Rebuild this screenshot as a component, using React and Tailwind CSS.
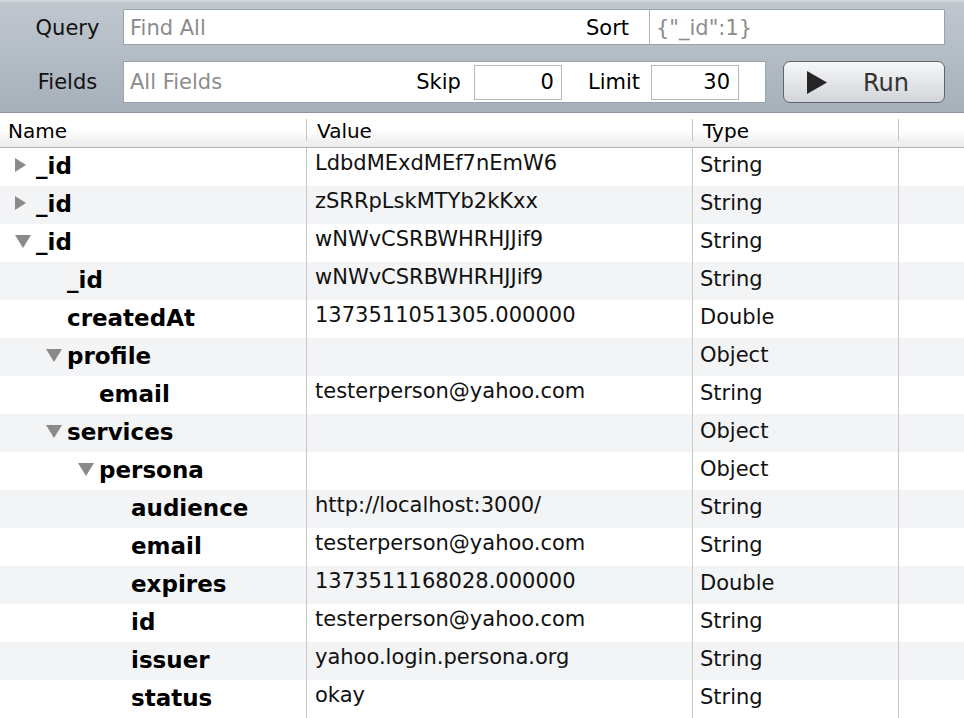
const rows = [
  { name: "_id", level: 0, toggle: "closed", value: "LdbdMExdMEf7nEmW6", type: "String" },
  { name: "_id", level: 0, toggle: "closed", value: "zSRRpLskMTYb2kKxx", type: "String" },
  { name: "_id", level: 0, toggle: "open", value: "wNWvCSRBWHRHJJif9", type: "String" },
  { name: "_id", level: 1, value: "wNWvCSRBWHRHJJif9", type: "String" },
  { name: "createdAt", level: 1, value: "1373511051305.000000", type: "Double" },
  { name: "profile", level: 1, toggle: "open", value: "", type: "Object" },
  { name: "email", level: 2, value: "testerperson@yahoo.com", type: "String" },
  { name: "services", level: 1, toggle: "open", value: "", type: "Object" },
  { name: "persona", level: 2, toggle: "open", value: "", type: "Object" },
  { name: "audience", level: 3, value: "http://localhost:3000/", type: "String" },
  { name: "email", level: 3, value: "testerperson@yahoo.com", type: "String" },
  { name: "expires", level: 3, value: "1373511168028.000000", type: "Double" },
  { name: "id", level: 3, value: "testerperson@yahoo.com", type: "String" },
  { name: "issuer", level: 3, value: "yahoo.login.persona.org", type: "String" },
  { name: "status", level: 3, value: "okay", type: "String" },
];

const indent = ["pl-[14px]", "pl-[45px]", "pl-[77px]", "pl-[109px]"];

function Toggle({ state }) {
  if (state === "closed") {
    return (
      <svg width="11" height="14" className="mt-[10px] ml-[1px]">
        <polygon points="0,0 11,7 0,14" fill="#8a8a8a" />
      </svg>
    );
  }
  if (state === "open") {
    return (
      <svg width="16" height="13" className="mt-[11px] ml-[1px]">
        <polygon points="0,0 16,0 8,13" fill="#8a8a8a" />
      </svg>
    );
  }
  return null;
}

function HeaderCell({ label, pad, sep = true }) {
  return (
    <div className={`flex items-start ${pad}`}>
      <span className="pt-[6px] leading-[24px] text-[20px] text-black">{label}</span>
      {sep && <div className="ml-auto self-center w-px h-[22px] bg-[#c4c4c4]" />}
    </div>
  );
}

export default function App() {
  return (
    <div className="w-[964px] h-[718px] overflow-hidden bg-white font-['DejaVu_Sans',sans-serif] text-[21px] text-[#111]">
      {/* toolbar */}
      <div className="h-[113px] border-t-2 border-t-[#cfd5db] border-b border-b-[#8b959f] bg-linear-to-b from-[#c0c7cf] to-[#a6b0ba] pt-[7px]">
        <div className="flex items-center h-[36px]">
          <div className="w-[123px] pl-[12px] pt-[4px] flex justify-center">Query</div>
          <div className="w-[822px] h-full bg-white border border-[#9aa2aa] flex items-center">
            <span className="flex-1 pl-[6px] pt-[4px] text-[#8c8c8c]">Find All</span>
            <span className="mr-[20px] pt-[4px] text-black">Sort</span>
            <div className="w-[295px] h-full border-l border-[#b4b4b4] pl-[6px] pt-[4px] flex items-center text-[#8c8c8c]">
              {'{"_id":1}'}
            </div>
          </div>
        </div>
        <div className="flex items-center h-[42px] mt-[16px]">
          <div className="w-[123px] pl-[12px] pt-[2px] flex justify-center">Fields</div>
          <div className="w-[643px] h-full bg-white border border-[#9aa2aa] flex items-center">
            <span className="flex-1 pl-[6px] pt-[2px] text-[#8c8c8c]">All Fields</span>
            <span className="mr-[13px] pt-[2px] text-black">Skip</span>
            <div className="w-[88px] h-[35px] border border-[#b8b8b8] flex items-center justify-end pr-[7px] pt-[2px] text-black">0</div>
            <span className="ml-[26px] mr-[11px] pt-[2px] text-black">Limit</span>
            <div className="w-[88px] h-[35px] border border-[#b8b8b8] flex items-center justify-end pr-[8px] pt-[2px] text-black mr-[26px]">30</div>
          </div>
          <button className="ml-[17px] w-[162px] h-[42px] rounded-[7px] border border-[#5f656c] bg-linear-to-b from-[#f6f7f8] to-[#d2d5d9] flex items-center pl-[23px]">
            <svg width="20" height="23">
              <polygon points="0,0 20,11.5 0,23" fill="#262626" />
            </svg>
            <span className="ml-[36px] pt-[2px] text-[24px] text-[#333]">Run</span>
          </button>
        </div>
      </div>

      {/* header */}
      <div className="h-[35px] grid grid-cols-[307px_386px_206px_1fr] bg-linear-to-b from-white via-white to-[#ebebeb] border-b border-[#b3b3b3]">
        <HeaderCell label="Name" pad="pl-[8px]" />
        <HeaderCell label="Value" pad="pl-[10px]" />
        <HeaderCell label="Type" pad="pl-[10px]" />
        <div />
      </div>

      {/* rows */}
      {rows.map((r, i) => (
        <div
          key={i}
          className={`h-[38px] grid grid-cols-[307px_386px_206px_1fr] ${i % 2 === 1 ? "bg-[#f3f4f5]" : "bg-white"}`}
        >
          <div className={`flex items-start border-r border-[#c8c8c8] ${indent[r.level]}`}>
            <div className="w-[22px] shrink-0 flex">
              <Toggle state={r.toggle} />
            </div>
            <span className="text-[23px] font-bold leading-[37px] text-black">{r.name}</span>
          </div>
          <div className="pl-[8px] leading-[30px] border-r border-[#c8c8c8]">{r.value}</div>
          <div className="pl-[7px] leading-[34px] border-r border-[#c8c8c8]">{r.type}</div>
          <div />
        </div>
      ))}
    </div>
  );
}
